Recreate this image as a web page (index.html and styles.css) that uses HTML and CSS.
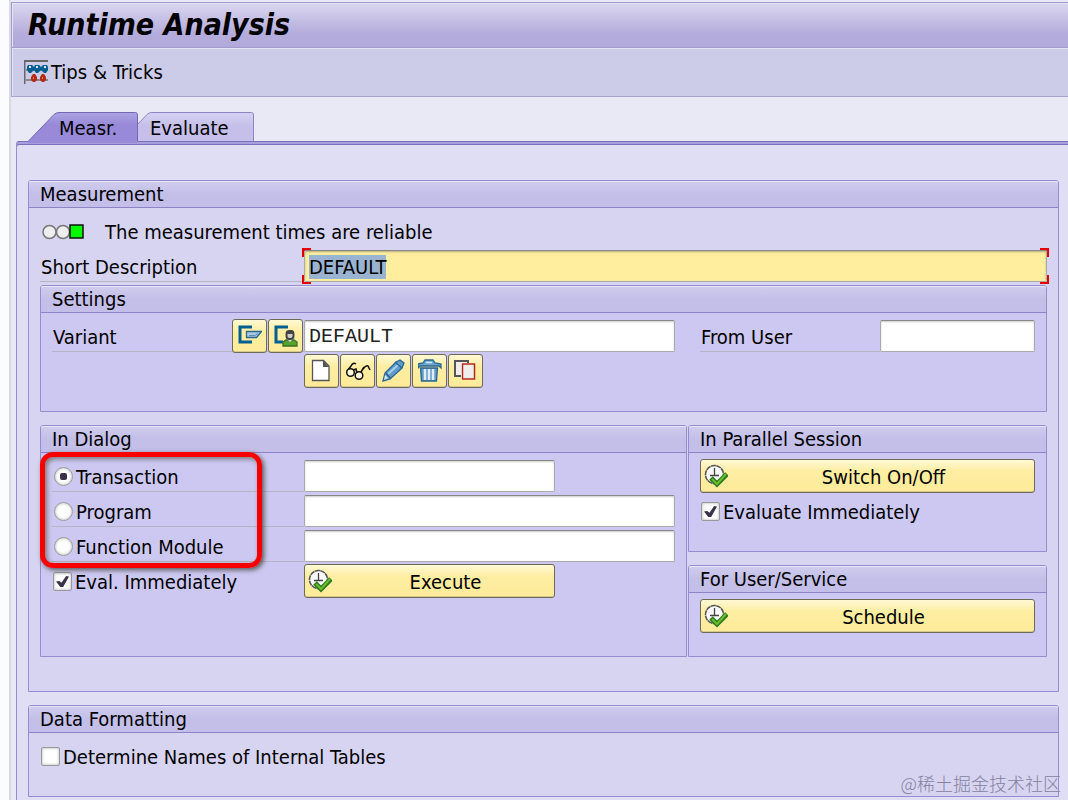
FILE: index.html
```html
<!DOCTYPE html>
<html lang="en">
<head>
    <meta charset="UTF-8">
    <title>Runtime Analysis</title>
    <link rel="stylesheet" href="styles.css">
</head>
<body>
    <!-- shared icons -->
    <svg class="defs" aria-hidden="true">
        <symbol id="icon-execute" viewBox="0 0 24 24">
            <circle cx="10.500" cy="10.500" r="9" fill="#fafafa" stroke="#555" stroke-width="1.600" stroke-dasharray="5 .5"/>
            <path d="M10.500 4v8M6 11.500h9" fill="none" stroke="#444" stroke-width="1.300"/>
            <path d="M7 14l6 6 10-10" fill="none" stroke="#2b7a1e" stroke-width="5"/>
            <path d="M8 15l5 5 9-10" fill="none" stroke="#6bbf2c" stroke-width="2"/>
        </symbol>
    </svg>

    <div class="window">
        <header class="title-bar">
            <h1>Runtime Analysis</h1>
        </header>

        <div class="toolbar">
            <button class="tool" type="button">
                <svg width="24" height="24" viewBox="0 0 24 24">
                    <path d="M.5 24V1h24" fill="none" stroke="#666" stroke-width="2"/>
                    <path d="M2 10h22M2 20h22" stroke="#888" stroke-width="2"/>
                    <g fill="#005f92">
                        <path d="M4 5h4l2 2v3l-3 3H5l-2-3V7z"/>
                        <path d="M11 5h4l2 2v3l-3 3h-2l-2-3V7z"/>
                        <path d="M19 5h4l1 2v3l-2 3h-2l-3-3V7z"/>
                    </g>
                    <g fill="#b42a12">
                        <path d="M9 14h2l2 3v3l-2 2H9l-2-2v-3z"/>
                        <path d="M18 14h2l2 3v3l-2 2h-2l-2-2v-3z"/>
                    </g>
                    <path d="M5 6h2v2H5zM12 6h2v2h-2zM20 6h2v2h-2z" fill="#d8e8f4"/>
                    <path d="M9 17h1v2H9zM18 17h1v2h-1z" fill="#e88070"/>
                </svg>
                Tips &amp; Tricks
            </button>
        </div>

        <nav class="tabs">
            <button class="tab active" type="button">
                <svg class="tab-shape" viewBox="0 0 110 31" preserveAspectRatio="none">
                    <defs>
                        <linearGradient id="tab-on" x2="0" y2="1">
                            <stop offset="0" stop-color="#aca3e2"/>
                            <stop offset=".4" stop-color="#988ad8"/>
                        </linearGradient>
                    </defs>
                    <path d="M0 29.500L26 2.500Q28 .5 31 .5H107.500Q109.500 .5 109.500 3V31H0z" fill="url(#tab-on)"/>
                    <path d="M0 29.500L26 2.500Q28 .5 31 .5H107.500Q109.500 .5 109.500 3V29" fill="none" stroke="#7468b4"/>
                </svg>
                <span>Measr.</span>
            </button>
            <button class="tab" type="button">
                <svg class="tab-shape" viewBox="0 0 116 31" preserveAspectRatio="none">
                    <defs>
                        <linearGradient id="tab-off" x2="0" y2="1">
                            <stop offset="0" stop-color="#d6d2f2"/>
                            <stop offset=".5" stop-color="#c5bfe9"/>
                        </linearGradient>
                    </defs>
                    <path d="M0 12L9 2.500Q11 .5 14 .5H113.500Q115.500 .5 115.500 3V29H0z" fill="url(#tab-off)"/>
                    <path d="M0 12L9 2.500Q11 .5 14 .5H113.500Q115.500 .5 115.500 3V29" fill="none" stroke="#8d83c6"/>
                </svg>
                <span>Evaluate</span>
            </button>
        </nav>

        <main class="panel">
            <section class="group">
                <h2>Measurement</h2>
                <div class="group-body measurement">
                    <div class="row status">
                        <svg width="42" height="16" viewBox="0 0 42 16">
                            <circle cx="7.500" cy="8" r="6.500" fill="#eee" stroke="#777" stroke-width="1.500"/>
                            <circle cx="21" cy="8" r="6.500" fill="#eee" stroke="#777" stroke-width="1.500"/>
                            <rect x="28" y="1" width="13" height="13" fill="#00f800" stroke="#111" stroke-width="1.500"/>
                        </svg>
                        <span>The measurement times are reliable</span>
                    </div>
                    <div class="row">
                        <label class="row-label wide" for="description">Short Description</label>
                        <div class="focus-frame">
                            <input class="field" id="description" type="text" value="DEFAULT">
                        </div>
                    </div>

                    <section class="group inner">
                        <h2>Settings</h2>
                        <div class="group-body">
                            <div class="row">
                                <div class="row-label">
                                    <label for="variant">Variant</label>
                                    <div class="label-buttons">
                                        <button class="btn icon-btn" type="button" aria-label="Choose variant">
                                            <svg width="24" height="24" viewBox="0 0 24 24">
                                                <path d="M14 3H2v15h12" fill="none" stroke="#005f92" stroke-width="3"/>
                                                <path d="M8.500 7.500h15l-5 6h-10z" fill="#a9c9e4" stroke="#2c6690" stroke-width="1.300"/>
                                                <path d="M11 11.500h6l3-2" fill="none" stroke="#5a8fb8"/>
                                            </svg>
                                        </button>
                                        <button class="btn icon-btn" type="button" aria-label="Choose user variant">
                                            <svg width="24" height="24" viewBox="0 0 24 24">
                                                <path d="M14 3H2v15h7" fill="none" stroke="#005f92" stroke-width="3"/>
                                                <path d="M9 22v-4l3-2h8l3 2v4z" fill="#57a32c" stroke="#3b6f28" stroke-width="1.300"/>
                                                <path d="M13 15l3 3 3-3v-2h-6z" fill="#ddd"/>
                                                <rect x="12.500" y="7" width="7" height="8" rx="3" fill="#ccc" stroke="#444" stroke-width="2"/>
                                                <path d="M12 10V8l3-2h3l2 2v2z" fill="#444"/>
                                            </svg>
                                        </button>
                                    </div>
                                </div>
                                <input class="field mono" id="variant" type="text" value="DEFAULT">
                                <label class="row-label user-label" for="from-user">From User</label>
                                <input class="field user-field" id="from-user" type="text">
                            </div>
                            <div class="row variant-tools">
                                <button class="btn icon-btn" type="button" aria-label="Create">
                                    <svg width="24" height="24" viewBox="0 0 24 24">
                                        <path d="M2.500 1.500h11l5.500 5.500v14.500H2.500z" fill="#fff" stroke="#555" stroke-width="1.300"/>
                                        <path d="M13 1v7h6z" fill="#555"/>
                                    </svg>
                                </button>
                                <button class="btn icon-btn" type="button" aria-label="Display">
                                    <svg width="26" height="24" viewBox="0 0 26 24" fill="none" stroke="#111" stroke-width="1.500">
                                        <path d="M11 5Q8 3 6 7l-4 5M18 10q5-6 6-1l1 2"/>
                                        <circle cx="5.500" cy="13.500" r="3.800" fill="#fff9dc"/>
                                        <circle cx="14" cy="16.500" r="3.800" fill="#fff9dc"/>
                                        <path d="M8 11l3-1 1 4M16 13l3-5"/>
                                    </svg>
                                </button>
                                <button class="btn icon-btn" type="button" aria-label="Change">
                                    <svg width="24" height="24" viewBox="0 0 24 24">
                                        <path d="M1 22l2-8L14 3l4-2 4 3-2 5L8 20z" fill="#5f9ccb" stroke="#2c6690" stroke-width="1.300"/>
                                        <path d="M6 15L17 5" stroke="#a9cdea" stroke-width="2"/>
                                        <path d="M13 3l7 6M4 14l5 6" stroke="#2c6690" stroke-width="1.500"/>
                                        <path d="M3 16l3 3-4 2z" fill="#d6e5f0"/>
                                    </svg>
                                </button>
                                <button class="btn icon-btn" type="button" aria-label="Delete">
                                    <svg width="24" height="24" viewBox="0 0 24 24">
                                        <path d="M2.500 9h17l-1 13h-15z" fill="#5f9ccb" stroke="#2c6690" stroke-width="1.300"/>
                                        <path d="M7 10v11M11 10v11M15 10v11" stroke="#e4edf4" stroke-width="2.500"/>
                                        <path d="M0 5l5-1 2-3h8l2 3 6 1v4l-2-2H2L0 9z" fill="#6aa6d2" stroke="#2c6690" stroke-width="1.300"/>
                                        <path d="M8 3.500h6" stroke="#d6e8f5" stroke-width="1.500"/>
                                    </svg>
                                </button>
                                <button class="btn icon-btn" type="button" aria-label="Copy">
                                    <svg width="24" height="24" viewBox="0 0 24 24">
                                        <path d="M7 17H1V2h13v2" fill="#eee" stroke="#555" stroke-width="2"/>
                                        <rect x="7" y="4" width="14" height="17" fill="#fff"/>
                                        <rect x="8.500" y="5" width="12" height="15" fill="#eee" stroke="#b42a12" stroke-width="1.500"/>
                                    </svg>
                                </button>
                            </div>
                        </div>
                    </section>

                    <div class="columns">
                        <section class="group inner dialog">
                            <h2>In Dialog</h2>
                            <div class="group-body">
                                <div class="row">
                                    <label class="row-label"><input class="radio" type="radio" name="object" checked>Transaction</label>
                                    <input class="field short" type="text" aria-label="Transaction">
                                </div>
                                <div class="row">
                                    <label class="row-label"><input class="radio" type="radio" name="object">Program</label>
                                    <input class="field" type="text" aria-label="Program">
                                </div>
                                <div class="row">
                                    <label class="row-label"><input class="radio" type="radio" name="object">Function Module</label>
                                    <input class="field" type="text" aria-label="Function Module">
                                </div>
                                <div class="row">
                                    <label class="row-label plain"><input class="check" type="checkbox" checked>Eval. Immediately</label>
                                    <button class="btn short" type="button"><svg class="btn-icon"><use href="#icon-execute"/></svg><span>Execute</span></button>
                                </div>
                            </div>
                            <div class="highlight"></div>
                        </section>

                        <div class="side">
                            <section class="group inner">
                                <h2>In Parallel Session</h2>
                                <div class="group-body">
                                    <div class="row">
                                        <button class="btn" type="button"><svg class="btn-icon"><use href="#icon-execute"/></svg><span>Switch On/Off</span></button>
                                    </div>
                                    <div class="row">
                                        <label class="row-label plain"><input class="check" type="checkbox" checked>Evaluate Immediately</label>
                                    </div>
                                </div>
                            </section>
                            <section class="group inner">
                                <h2>For User/Service</h2>
                                <div class="group-body">
                                    <div class="row">
                                        <button class="btn" type="button"><svg class="btn-icon"><use href="#icon-execute"/></svg><span>Schedule</span></button>
                                    </div>
                                </div>
                            </section>
                        </div>
                    </div>
                </div>
            </section>

            <section class="group">
                <h2>Data Formatting</h2>
                <div class="group-body">
                    <div class="row">
                        <label class="row-label plain"><input class="check" type="checkbox">Determine Names of Internal Tables</label>
                    </div>
                </div>
            </section>
        </main>
    </div>

    <div class="watermark">@稀土掘金技术社区</div>

    <script>
        const description = document.getElementById('description');
        description.focus();
        description.select();
    </script>
</body>
</html>
```
FILE: styles.css
```css
* {
    box-sizing: border-box;
}

body {
    margin: 0;
    background: #fcfcff;
    color: #000;
    font-family: "DejaVu Sans Condensed", "DejaVu Sans", sans-serif;
    font-size: 20px;
    line-height: 26px;
}

button, input {
    font: inherit;
    color: inherit;
}

h1, h2 {
    margin: 0;
}

.defs {
    position: absolute;
    width: 0;
    height: 0;
}

.window {
    display: flex;
    flex-direction: column;
    min-height: 100vh;
    margin-left: 9px;
    padding-top: 2px;
    border-left: 2px solid #d9d9e5;
    background: #e9e9f5;
}

.title-bar {
    display: flex;
    align-items: center;
    height: 46px;
    padding-left: 16px;
    border: 1px solid #a39bcc;
    border-right: 0;
    background: linear-gradient(#dad7ef, #b4acdc 70%, #b2aadb);
    box-shadow: inset 1px 1px #e4e2f4;
}

.title-bar h1 {
    font-size: 30px;
    font-weight: bold;
    font-style: italic;
    line-height: 36px;
}

.toolbar {
    display: flex;
    align-items: center;
    height: 49px;
    padding-left: 12px;
    border: 1px solid #a8a3cf;
    border-top: 0;
    border-right: 0;
    background: #cdcce8;
    box-shadow: inset 1px 1px #e4e3f5;
}

.tool {
    display: flex;
    align-items: center;
    gap: 3px;
    padding: 0;
    border: 0;
    background: none;
}

/* Tabs */
.tabs {
    display: flex;
    margin-top: 15px;
    padding-left: 17px;
}

.tab {
    position: relative;
    min-width: 116px;
    height: 29px;
    padding: 3px 12px 1px;
    border: 0;
    background: none;
    text-align: left;
}

.tab.active {
    z-index: 1;
    min-width: 110px;
    padding-left: 31px;
}

.tab span {
    position: relative;
}

.tab-shape {
    position: absolute;
    top: 0;
    left: 0;
    width: 100%;
    height: 31px;
}

.panel {
    flex: 1;
    margin-left: 5px;
    padding: 38px 9px 3px 11px;
    border-top: 1px solid #7b70bc;
    border-left: 1px solid #968cd0;
    border-radius: 3px 0 0 0;
    background: #e0def4;
    box-shadow: inset 0 2px #a79fdd, inset 0 3px #7b70bc;
}

/* Groups */
.group {
    border: 1px solid #968cd0;
    border-radius: 3px 3px 0 0;
    background: #d7d4f2;
}

.group + .group {
    margin-top: 13px;
}

.group h2 {
    height: 27px;
    padding-left: 11px;
    border-bottom: 1px solid #8d83c6;
    border-radius: 2px 2px 0 0;
    background: linear-gradient(#d0cdee, #c3bfe8 50%);
    box-shadow: inset 0 1px #e6e4f7;
    font-size: 20px;
    font-weight: normal;
}

.group-body {
    padding: 7px 11px 21px;
}

.group-body.measurement {
    padding-bottom: 34px;
}

.inner {
    background: #cdc8f1;
}

.columns {
    display: grid;
    grid-template-columns: 1fr 359px;
    gap: 1px;
    margin-top: 13px;
}

/* Rows */
.row {
    display: flex;
    align-items: flex-start;
    height: 35px;
}

.row-label {
    display: flex;
    flex: none;
    align-items: center;
    gap: 3px;
    width: 252px;
    height: 32px;
    padding: 2px 0 0 1px;
    border-bottom: 1px solid #b5b3c4;
}

.row-label.wide {
    width: 264px;
}

.row-label.plain {
    border-bottom-color: transparent;
}

.side .row-label,
.panel > .group > .group-body > .row > .plain {
    width: auto;
}

.status {
    gap: 21px;
    align-items: center;
    padding-left: 2px;
    padding-bottom: 1px;
}

.label-buttons {
    display: flex;
    gap: 1px;
    margin-left: auto;
    padding-right: 1px;
}

.field {
    flex: 1;
    min-width: 0;
    width: 100%;
    height: 32px;
    padding: 1px 4px 0;
    border: 1px solid #aaa;
    border-top-color: #888;
    border-radius: 2px;
    background: #fff;
    box-shadow: inset 0 1px 2px #ccc;
    outline: none;
}

.mono {
    color: #222;
    font-family: "Liberation Mono", monospace;
}

.short {
    flex: 0 0 251px;
}

.user-label {
    width: 180px;
    margin-left: 25px;
}

.user-field {
    flex: 0 0 155px;
}

/* Red corner marks round the active field */
.focus-frame {
    position: relative;
    flex: 1;
    height: 32px;
}

.focus-frame::before {
    content: "";
    position: absolute;
    inset: -2px;
    background:
        linear-gradient(#e00000, #e00000) left top / 9px 3px,
        linear-gradient(#e00000, #e00000) left top / 2px 9px,
        linear-gradient(#e00000, #e00000) right top / 9px 3px,
        linear-gradient(#e00000, #e00000) right top / 2px 9px,
        linear-gradient(#e00000, #e00000) left bottom / 9px 2px,
        linear-gradient(#e00000, #e00000) left bottom / 2px 9px,
        linear-gradient(#e00000, #e00000) right bottom / 9px 2px,
        linear-gradient(#e00000, #e00000) right bottom / 2px 9px;
    background-repeat: no-repeat;
}

.focus-frame .field {
    position: relative;
    display: block;
    background: #feee9e;
    box-shadow: inset 0 1px 2px #b5ac80;
}

.field::selection {
    background: #9ab3d0;
    color: #000;
}

/* Buttons */
.btn {
    display: flex;
    flex: 1;
    align-items: center;
    height: 34px;
    margin-top: -1px;
    padding: 0 3px;
    border: 1px solid #6e6a58;
    border-radius: 3px;
    background: linear-gradient(#fff9d6, #feeea2 35%, #feeb9a);
    box-shadow: inset 0 -1px #d5c98a;
}

.btn span {
    flex: 1;
    padding: 1px 0 0 8px;
    text-align: center;
}

.btn.short {
    flex: 0 0 251px;
}

.btn-icon {
    width: 24px;
    height: 24px;
}

.icon-btn {
    flex: none;
    justify-content: center;
    width: 35px;
    padding: 0;
}

.variant-tools {
    gap: 1px;
    padding-left: 252px;
}

/* Radios and checkboxes */
.radio,
.check {
    display: grid;
    place-items: center;
    flex: none;
    width: 19px;
    height: 19px;
    margin: 0;
    appearance: none;
    border: 1px solid #999;
    background: #fff;
    box-shadow: inset 0 0 3px #aaa;
}

.radio {
    margin-left: 1px;
    border-radius: 50%;
}

.check {
    border-radius: 2px;
}

.radio:checked::before {
    content: "";
    width: 7px;
    height: 7px;
    border-radius: 2px;
    background: #3b3149;
}

.check:checked::before {
    content: "";
    width: 13px;
    height: 11px;
    background: #3b3149;
    clip-path: polygon(0 50%, 25% 45%, 42% 62%, 78% 0, 100% 5%, 55% 100%, 33% 100%);
}

.dialog {
    position: relative;
}

.highlight {
    position: absolute;
    top: 26px;
    left: -1px;
    width: 222px;
    height: 116px;
    border: 5px solid #f80000;
    border-radius: 13px;
    box-shadow: 2px 2px 5px #555, inset 2px 2px 5px #777;
    pointer-events: none;
}

.watermark {
    position: absolute;
    right: 7px;
    top: 770px;
    color: #85829d;
    font-family: "Noto Sans CJK SC", sans-serif;
    font-size: 18px;
    font-weight: 300;
}
```
